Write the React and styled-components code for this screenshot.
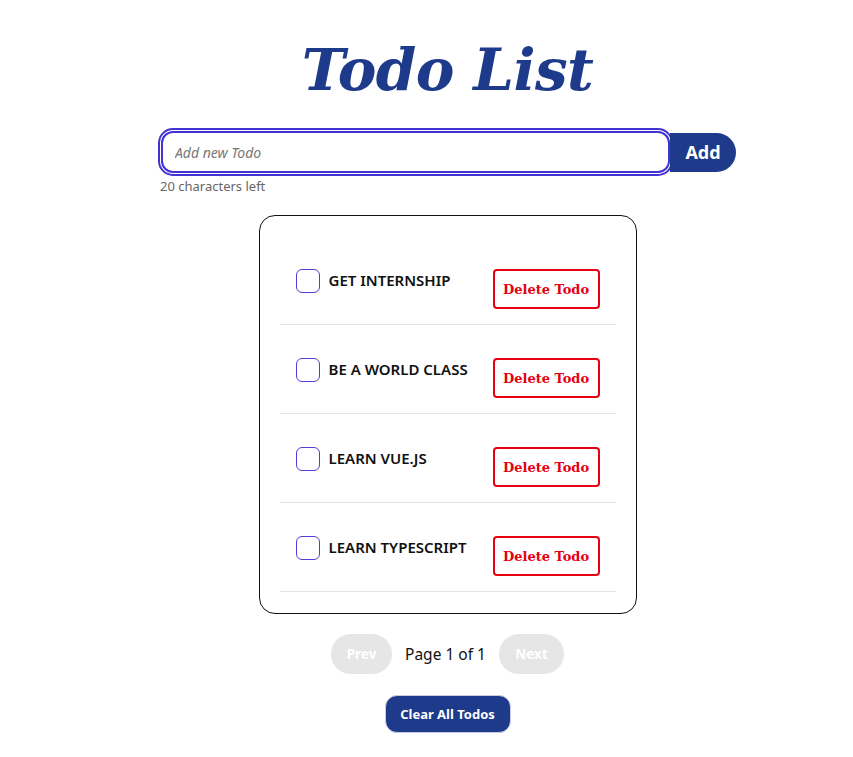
import React, { useState } from 'react'
import styled, { createGlobalStyle } from 'styled-components'

const GlobalStyle = createGlobalStyle`
  * { box-sizing: border-box; }
  body {
    margin: 0;
    background: #fff;
    font-family: "Noto Sans", "Open Sans", sans-serif;
    color: #111;
  }
`;

const todosData = [
  { id: 1, text: 'GET INTERNSHIP' },
  { id: 2, text: 'BE A WORLD CLASS' },
  { id: 3, text: 'LEARN VUE.JS' },
  { id: 4, text: 'LEARN TYPESCRIPT' },
]

function App() {
  const [value, setValue] = useState('')
  const [todos, setTodos] = useState(todosData)

  return (
    <Page>
      <GlobalStyle />
      <Title>Todo List</Title>
      <FormBlock>
        <InputRow>
          <TodoInput
            placeholder='Add new Todo'
            value={value}
            maxLength={20}
            onChange={(e) => setValue(e.target.value)}
          />
          <AddButton>Add</AddButton>
        </InputRow>
        <Counter>{20 - value.length} characters left</Counter>
      </FormBlock>

      <Card>
        {todos.map((t) => (
          <Item key={t.id}>
            <Left>
              <Check type='checkbox' />
              <ItemText>{t.text}</ItemText>
            </Left>
            <DeleteButton onClick={() => setTodos(todos.filter((x) => x.id !== t.id))}>
              Delete Todo
            </DeleteButton>
          </Item>
        ))}
      </Card>

      <Pager>
        <PageButton $w={61} disabled>Prev</PageButton>
        <PageLabel>Page 1 of 1</PageLabel>
        <PageButton $w={65} disabled>Next</PageButton>
      </Pager>

      <ClearButton onClick={() => setTodos([])}>Clear All Todos</ClearButton>
    </Page>
  )
}

const Page = styled.div`
  display: flex;
  flex-direction: column;
  align-items: center;
  padding: 26px 0 24px 42px;
`;

const Title = styled.h1`
  margin: 0;
  font-family: "DejaVu Serif", "Liberation Serif", serif;
  font-style: italic;
  font-weight: 700;
  font-size: 58px;
  line-height: 88px;
  color: #1e3a8a;
  letter-spacing: -0.6px;
`;

const FormBlock = styled.div`
  margin-top: 15px;
  width: 577px;
`;

const InputRow = styled.div`
  display: flex;
  align-items: center;
`;

const TodoInput = styled.input`
  flex: 1;
  height: 42px;
  margin: 2px;
  padding: 0 12px;
  border: 2px solid #4332d4;
  outline: 2px solid #4332d4;
  outline-offset: 1px;
  border-radius: 12px;
  font-family: inherit;
  font-size: 14px;
  color: #333;
  &::placeholder {
    color: #777;
    font-style: italic;
  }
`;

const AddButton = styled.button`
  width: 66px;
  height: 39px;
  margin-left: -2px;
  border: none;
  border-radius: 0 20px 20px 0;
  background: #1e3a8a;
  color: #fff;
  font-family: inherit;
  font-weight: 700;
  font-size: 18px;
  cursor: pointer;
`;

const Counter = styled.div`
  margin-top: 2px;
  padding-left: 1px;
  font-size: 13px;
  color: #666;
`;

const Card = styled.ul`
  list-style: none;
  margin: 20px 0 0;
  padding: 20px 20px 21px;
  width: 378px;
  border: 1px solid #111;
  border-radius: 16px;
`;

const Item = styled.li`
  display: flex;
  align-items: flex-start;
  justify-content: space-between;
  padding: 33px 16px 15px;
  border-bottom: 1px solid #e4e4e4;
`;

const Left = styled.div`
  display: flex;
  align-items: center;
  gap: 9px;
`;

const Check = styled.input`
  appearance: none;
  margin: 0;
  width: 24px;
  height: 24px;
  border: 1px solid #4f3fd8;
  border-radius: 6px;
  background: #fff;
  cursor: pointer;
`;

const ItemText = styled.span`
  font-size: 15px;
  font-weight: 600;
  color: #111;
  line-height: 24px;
  margin-top: -2px;
`;

const DeleteButton = styled.button`
  width: 107px;
  height: 40px;
  border: 2px solid #e60012;
  border-radius: 4px;
  background: #fff;
  color: #e60012;
  font-family: "DejaVu Serif", "Liberation Serif", serif;
  font-weight: 700;
  font-size: 13px;
  padding: 0;
  cursor: pointer;
`;

const Pager = styled.div`
  display: flex;
  align-items: center;
  gap: 13px;
  margin-top: 20px;
`;

const PageButton = styled.button`
  width: ${(p) => p.$w}px;
  height: 40px;
  padding: 0;
  border: none;
  border-radius: 20px;
  background: #e6e6e6;
  color: #fff;
  font-family: inherit;
  font-weight: 700;
  font-size: 13.5px;
`;

const PageLabel = styled.span`
  font-size: 15.5px;
  color: #111;
`;

const ClearButton = styled.button`
  margin-top: 21px;
  width: 126px;
  height: 38px;
  border: 1px solid #c8cde0;
  border-radius: 12px;
  background: #1e3a8a;
  color: #fff;
  font-family: inherit;
  font-weight: 700;
  font-size: 13px;
  cursor: pointer;
`;

export default App
